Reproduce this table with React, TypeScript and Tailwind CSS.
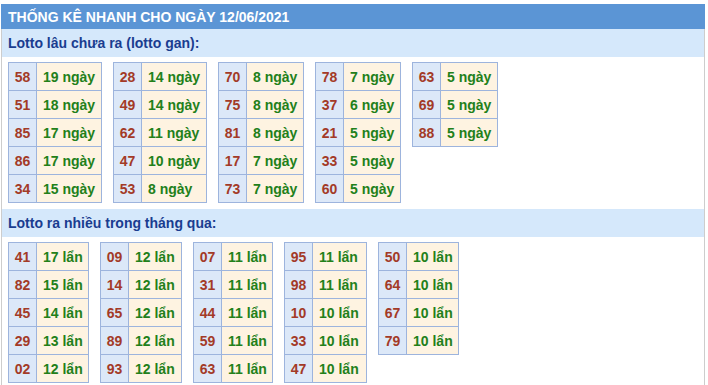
const gan: [string, string][][] = [
  [["58", "19 ngày"], ["51", "18 ngày"], ["85", "17 ngày"], ["86", "17 ngày"], ["34", "15 ngày"]],
  [["28", "14 ngày"], ["49", "14 ngày"], ["62", "11 ngày"], ["47", "10 ngày"], ["53", "8 ngày"]],
  [["70", "8 ngày"], ["75", "8 ngày"], ["81", "8 ngày"], ["17", "7 ngày"], ["73", "7 ngày"]],
  [["78", "7 ngày"], ["37", "6 ngày"], ["21", "5 ngày"], ["33", "5 ngày"], ["60", "5 ngày"]],
  [["63", "5 ngày"], ["69", "5 ngày"], ["88", "5 ngày"]],
];
const ganW = ["w-[65px]", "w-[65px]", "w-[57px]", "w-[57px]", "w-[57px]"];

const nhieu: [string, string][][] = [
  [["41", "17 lẩn"], ["82", "15 lẩn"], ["45", "14 lẩn"], ["29", "13 lẩn"], ["02", "12 lẩn"]],
  [["09", "12 lẩn"], ["14", "12 lẩn"], ["65", "12 lẩn"], ["89", "12 lẩn"], ["93", "12 lẩn"]],
  [["07", "11 lẩn"], ["31", "11 lẩn"], ["44", "11 lẩn"], ["59", "11 lẩn"], ["63", "11 lẩn"]],
  [["95", "11 lẩn"], ["98", "11 lẩn"], ["10", "10 lẩn"], ["33", "10 lẩn"], ["47", "10 lẩn"]],
  [["50", "10 lẩn"], ["64", "10 lẩn"], ["67", "10 lẩn"], ["79", "10 lẩn"]],
];
const nhieuW = ["w-[52px]", "w-[53px]", "w-[51px]", "w-[54px]", "w-[52px]"];

function Box({ rows, w }: { rows: [string, string][]; w: string }) {
  return (
    <div className="flex flex-col border-l border-t border-[#9db4dd]">
      {rows.map(([num, label]) => (
        <div key={num + label} className="flex">
          <div className="w-[28px] h-[28px] flex items-center justify-center border-r border-b border-[#9db4dd] bg-[#dce8f8] text-[#a33a27]">
            {num}
          </div>
          <div className={`${w} h-[28px] pl-[6px] flex items-center border-r border-b border-[#9db4dd] bg-[#fef3e1] text-[#22801a]`}>
            {label}
          </div>
        </div>
      ))}
    </div>
  );
}

function Section({ title, boxes, widths }: { title: string; boxes: [string, string][][]; widths: string[] }) {
  return (
    <>
      <div className="h-[28px] flex items-center pl-[6px] bg-[#d5e8fb] text-[#1a3d90]">
        {title}
      </div>
      <div className="flex items-start gap-[11px] pl-[6px] pt-[5px] pb-[6px]">
        {boxes.map((b, i) => (
          <Box key={i} rows={b} w={widths[i]} />
        ))}
      </div>
    </>
  );
}

export default function App() {
  return (
    <div className="w-[708px] h-[385px] bg-white overflow-hidden font-['Liberation_Sans',Arial,sans-serif] font-bold text-[14px] leading-[16px]">
      <div className="ml-[1px] mt-[4px] w-[704px]">
        <div className="h-[25px] flex items-center pl-[7px] bg-[#5b95d5] text-white">
          THỐNG KÊ NHANH CHO NGÀY 12/06/2021
        </div>
        <div className="border-x border-[#cdcdcd] h-[400px]">
          <Section title="Lotto lâu chưa ra (lotto gan):" boxes={gan} widths={ganW} />
          <Section title="Lotto ra nhiều trong tháng qua:" boxes={nhieu} widths={nhieuW} />
        </div>
      </div>
    </div>
  );
}
